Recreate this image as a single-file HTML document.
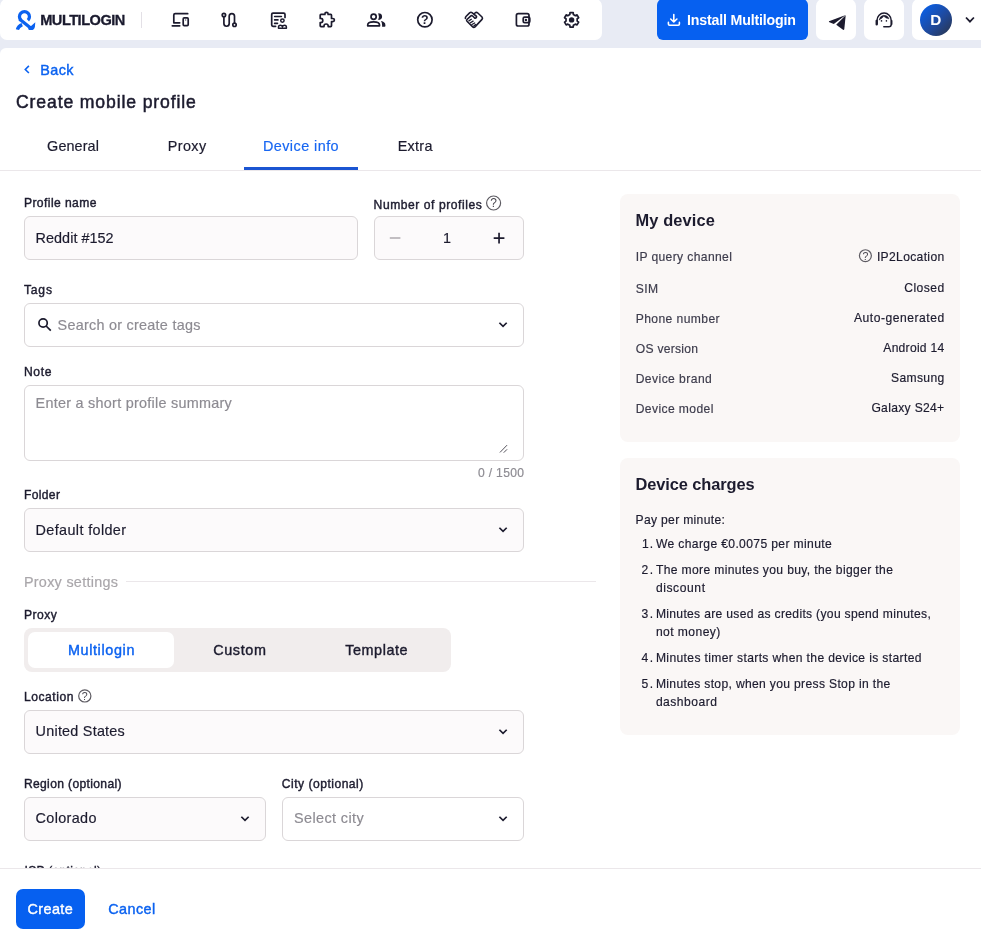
<!DOCTYPE html>
<html lang="en">
<head>
<meta charset="utf-8">
<title>Create mobile profile</title>
<style>
html,body{margin:0;padding:0;}
body{width:981px;height:941px;overflow:hidden;position:relative;background:#e8ebf4;font-family:"Liberation Sans",sans-serif;}
.abs{position:absolute;box-sizing:border-box;}
.t{position:absolute;white-space:nowrap;line-height:20px;}
.panel{background:#fff;}
.inp{border:1px solid #dad6d8;border-radius:6px;background:#fcfafb;}
.inp.w{background:#fff;}
.card{background:#faf7f6;border-radius:8px;}
svg{position:absolute;left:0;top:0;overflow:visible;}
</style>
</head>
<body>
<!-- top bar panels -->
<div class="abs panel" style="left:0;top:-1px;width:602px;height:41px;border-radius:7px;"></div>
<div class="abs" style="left:657px;top:-1px;width:151px;height:41px;border-radius:6px;background:#0660f0;"></div>
<div class="abs panel" style="left:816px;top:-1px;width:40px;height:41px;border-radius:7px;"></div>
<div class="abs panel" style="left:864px;top:-1px;width:40px;height:41px;border-radius:7px;"></div>
<div class="abs panel" style="left:912px;top:-1px;width:80px;height:41px;border-radius:7px;"></div>
<div class="abs" style="left:920px;top:4px;width:32px;height:32px;border-radius:16px;background:linear-gradient(135deg,#0a5fe6 10%,#1f4a9e 55%,#2a3650 95%);"></div>
<!-- main panel -->
<div class="abs panel" style="left:0;top:48px;width:990px;height:900px;border-radius:6px 0 0 0;"></div>
<!-- tab line -->
<div class="abs" style="left:0;top:170px;width:981px;height:1px;background:#ebe7ea;"></div>
<div class="abs" style="left:244px;top:167px;width:114px;height:3px;background:#1b55d2;"></div>
<!-- inputs -->
<div class="abs inp" style="left:24px;top:216px;width:334px;height:44px;"></div>
<div class="abs inp" style="left:374px;top:216px;width:150px;height:44px;"></div>
<div class="abs inp w" style="left:24px;top:303px;width:500px;height:44px;"></div>
<div class="abs inp w" style="left:24px;top:385px;width:500px;height:76px;"></div>
<div class="abs inp" style="left:24px;top:508px;width:500px;height:44px;"></div>
<div class="abs" style="left:126px;top:581px;width:470px;height:1px;background:#ebe7ea;"></div>
<div class="abs" style="left:24px;top:628px;width:427px;height:44px;border-radius:8px;background:#f1eded;"></div>
<div class="abs" style="left:28px;top:632px;width:146px;height:36px;border-radius:7px;background:#fff;"></div>
<div class="abs inp" style="left:24px;top:710px;width:500px;height:44px;"></div>
<div class="abs inp" style="left:24px;top:797px;width:242px;height:44px;"></div>
<div class="abs inp w" style="left:282px;top:797px;width:242px;height:44px;"></div>
<!-- cards -->
<div class="abs card" style="left:620px;top:194px;width:340px;height:248px;"></div>
<div class="abs card" style="left:620px;top:458px;width:340px;height:277px;"></div>
<div class="abs" style="left:0;top:0;width:981px;height:941px;will-change:transform;">
<!-- ISP label (clipped by footer) -->
<div class="abs" style="left:0;top:850px;width:600px;height:18px;overflow:hidden;">
  <span class="t isp" style="left:24.5px;top:10.6px;font-size:12.1px;color:#1c1b2e;-webkit-text-stroke:0.35px #1c1b2e;letter-spacing:0.27px;">ISP (optional)</span>
</div>
<!-- footer -->
<div class="abs" style="left:0;top:868px;width:981px;height:73px;background:#fff;border-top:1px solid #ebe7ea;"></div>
<div class="abs" style="left:16px;top:889px;width:69px;height:40px;border-radius:7px;background:#0660f0;"></div>

<span class="t" style="top:10.00px;font-size:14.6px;color:#1a1a2e;font-weight:700;letter-spacing:-0.502px;left:40.20px;-webkit-text-stroke:0.3px #1a1a2e;">MULTILOGIN</span>
<span class="t" style="top:10.00px;font-size:14.2px;color:#ffffff;font-weight:700;letter-spacing:-0.172px;left:687.00px;">Install Multilogin</span>
<span class="t" style="top:9.50px;font-size:15.3px;color:#ffffff;font-weight:700;left:930.30px;">D</span>
<span class="t" style="top:60.00px;font-size:14.4px;color:#0b62f0;-webkit-text-stroke:0.4px #0b62f0;letter-spacing:0.400px;left:40.30px;">Back</span>
<span class="t" style="top:92.00px;font-size:17.6px;color:#1c1b2e;-webkit-text-stroke:0.5px #1c1b2e;letter-spacing:0.873px;left:16.00px;">Create mobile profile</span>
<span class="t" style="top:136.00px;font-size:14.4px;color:#1c1b2e;-webkit-text-stroke:0.18px #1c1b2e;letter-spacing:0.099px;left:47.10px;">General</span>
<span class="t" style="top:136.00px;font-size:14.4px;color:#1c1b2e;-webkit-text-stroke:0.18px #1c1b2e;letter-spacing:0.401px;left:167.70px;">Proxy</span>
<span class="t" style="top:136.00px;font-size:14.4px;color:#1766f2;-webkit-text-stroke:0.18px #1766f2;letter-spacing:0.451px;left:262.90px;">Device info</span>
<span class="t" style="top:136.00px;font-size:14.4px;color:#1c1b2e;-webkit-text-stroke:0.18px #1c1b2e;letter-spacing:0.277px;left:397.70px;">Extra</span>
<span class="t" style="top:193.00px;font-size:12.1px;color:#1c1b2e;-webkit-text-stroke:0.4px #1c1b2e;letter-spacing:0.427px;left:23.90px;">Profile name</span>
<span class="t" style="top:195.00px;font-size:12.1px;color:#1c1b2e;-webkit-text-stroke:0.4px #1c1b2e;letter-spacing:0.552px;left:373.60px;">Number of profiles</span>
<span class="t" style="top:280.00px;font-size:12.1px;color:#1c1b2e;-webkit-text-stroke:0.4px #1c1b2e;letter-spacing:0.851px;left:23.90px;">Tags</span>
<span class="t" style="top:362.00px;font-size:12.1px;color:#1c1b2e;-webkit-text-stroke:0.4px #1c1b2e;letter-spacing:0.684px;left:23.90px;">Note</span>
<span class="t" style="top:485.00px;font-size:12.1px;color:#1c1b2e;-webkit-text-stroke:0.4px #1c1b2e;letter-spacing:0.364px;left:23.90px;">Folder</span>
<span class="t" style="top:605.00px;font-size:12.1px;color:#1c1b2e;-webkit-text-stroke:0.4px #1c1b2e;letter-spacing:0.520px;left:23.90px;">Proxy</span>
<span class="t" style="top:687.00px;font-size:12.1px;color:#1c1b2e;-webkit-text-stroke:0.4px #1c1b2e;letter-spacing:0.552px;left:23.90px;">Location</span>
<span class="t" style="top:774.00px;font-size:12.1px;color:#1c1b2e;-webkit-text-stroke:0.4px #1c1b2e;letter-spacing:0.349px;left:23.90px;">Region (optional)</span>
<span class="t" style="top:774.00px;font-size:12.1px;color:#1c1b2e;-webkit-text-stroke:0.4px #1c1b2e;letter-spacing:0.492px;left:281.80px;">City (optional)</span>
<span class="t" style="top:228.00px;font-size:14.4px;color:#1c1b2e;-webkit-text-stroke:0.18px #1c1b2e;letter-spacing:0.037px;left:35.60px;">Reddit #152</span>
<span class="t" style="top:228.00px;font-size:14.4px;color:#1c1b2e;-webkit-text-stroke:0.18px #1c1b2e;left:443.00px;">1</span>
<span class="t" style="top:315.00px;font-size:14.4px;color:#8d8b92;-webkit-text-stroke:0.18px #8d8b92;letter-spacing:0.260px;left:57.60px;">Search or create tags</span>
<span class="t" style="top:393.00px;font-size:14.4px;color:#8d8b92;-webkit-text-stroke:0.18px #8d8b92;letter-spacing:0.266px;left:35.60px;">Enter a short profile summary</span>
<span class="t" style="top:463.00px;font-size:12.1px;color:#8d8b92;-webkit-text-stroke:0.18px #8d8b92;letter-spacing:0.326px;left:478.00px;">0 / 1500</span>
<span class="t" style="top:520.00px;font-size:14.4px;color:#1c1b2e;-webkit-text-stroke:0.18px #1c1b2e;letter-spacing:0.370px;left:35.60px;">Default folder</span>
<span class="t" style="top:572.00px;font-size:14.4px;color:#a9a6aa;-webkit-text-stroke:0.18px #a9a6aa;letter-spacing:0.285px;left:23.90px;">Proxy settings</span>
<span class="t" style="top:640.00px;font-size:14.4px;color:#0b62f0;-webkit-text-stroke:0.4px #0b62f0;letter-spacing:0.634px;left:67.90px;">Multilogin</span>
<span class="t" style="top:640.00px;font-size:14.4px;color:#1c1b2e;-webkit-text-stroke:0.4px #1c1b2e;letter-spacing:0.621px;left:213.20px;">Custom</span>
<span class="t" style="top:640.00px;font-size:14.4px;color:#1c1b2e;-webkit-text-stroke:0.4px #1c1b2e;letter-spacing:0.542px;left:345.30px;">Template</span>
<span class="t" style="top:721.00px;font-size:14.4px;color:#1c1b2e;-webkit-text-stroke:0.18px #1c1b2e;letter-spacing:0.233px;left:35.60px;">United States</span>
<span class="t" style="top:808.00px;font-size:14.4px;color:#1c1b2e;-webkit-text-stroke:0.18px #1c1b2e;letter-spacing:0.342px;left:35.60px;">Colorado</span>
<span class="t" style="top:808.00px;font-size:14.4px;color:#8d8b92;-webkit-text-stroke:0.18px #8d8b92;letter-spacing:0.411px;left:294.00px;">Select city</span>
<span class="t" style="top:899.00px;font-size:14.4px;color:#ffffff;-webkit-text-stroke:0.4px #ffffff;letter-spacing:0.419px;left:27.50px;">Create</span>
<span class="t" style="top:899.00px;font-size:14.4px;color:#0b62f0;-webkit-text-stroke:0.4px #0b62f0;letter-spacing:0.441px;left:108.20px;">Cancel</span>
<span class="t" style="top:210.00px;font-size:16.4px;color:#1c1b2e;font-weight:700;letter-spacing:0.105px;left:635.60px;">My device</span>
<span class="t" style="top:247.00px;font-size:12.1px;color:#3d3c4c;-webkit-text-stroke:0.18px #3d3c4c;letter-spacing:0.377px;left:635.70px;">IP query channel</span>
<span class="t" style="top:247.00px;font-size:12.1px;color:#1c1b2e;-webkit-text-stroke:0.18px #1c1b2e;letter-spacing:0.341px;left:876.90px;">IP2Location</span>
<span class="t" style="top:279.00px;font-size:12.1px;color:#3d3c4c;-webkit-text-stroke:0.18px #3d3c4c;letter-spacing:0.442px;left:635.70px;">SIM</span>
<span class="t" style="top:278.00px;font-size:12.1px;color:#1c1b2e;-webkit-text-stroke:0.18px #1c1b2e;letter-spacing:0.469px;left:904.20px;">Closed</span>
<span class="t" style="top:309.00px;font-size:12.1px;color:#3d3c4c;-webkit-text-stroke:0.18px #3d3c4c;letter-spacing:0.414px;left:635.70px;">Phone number</span>
<span class="t" style="top:308.00px;font-size:12.1px;color:#1c1b2e;-webkit-text-stroke:0.18px #1c1b2e;letter-spacing:0.525px;left:854.00px;">Auto-generated</span>
<span class="t" style="top:339.00px;font-size:12.1px;color:#3d3c4c;-webkit-text-stroke:0.18px #3d3c4c;letter-spacing:0.286px;left:635.70px;">OS version</span>
<span class="t" style="top:338.00px;font-size:12.1px;color:#1c1b2e;-webkit-text-stroke:0.18px #1c1b2e;letter-spacing:0.267px;left:883.30px;">Android 14</span>
<span class="t" style="top:369.00px;font-size:12.1px;color:#3d3c4c;-webkit-text-stroke:0.18px #3d3c4c;letter-spacing:0.439px;left:635.70px;">Device brand</span>
<span class="t" style="top:368.00px;font-size:12.1px;color:#1c1b2e;-webkit-text-stroke:0.18px #1c1b2e;letter-spacing:0.334px;left:891.10px;">Samsung</span>
<span class="t" style="top:399.00px;font-size:12.1px;color:#3d3c4c;-webkit-text-stroke:0.18px #3d3c4c;letter-spacing:0.403px;left:635.70px;">Device model</span>
<span class="t" style="top:398.00px;font-size:12.1px;color:#1c1b2e;-webkit-text-stroke:0.18px #1c1b2e;letter-spacing:0.321px;left:871.40px;">Galaxy S24+</span>
<span class="t" style="top:474.00px;font-size:16.4px;color:#1c1b2e;font-weight:700;letter-spacing:-0.099px;left:635.60px;">Device charges</span>
<span class="t" style="top:510.00px;font-size:12.1px;color:#1c1b2e;-webkit-text-stroke:0.18px #1c1b2e;letter-spacing:0.321px;left:635.60px;">Pay per minute:</span>
<span class="t" style="top:534.00px;font-size:12.1px;color:#1c1b2e;-webkit-text-stroke:0.18px #1c1b2e;letter-spacing:0.906px;left:642.00px;">1.</span>
<span class="t" style="top:534.00px;font-size:12.1px;color:#1c1b2e;-webkit-text-stroke:0.18px #1c1b2e;letter-spacing:0.369px;left:655.90px;">We charge €0.0075 per minute</span>
<span class="t" style="top:560.00px;font-size:12.1px;color:#1c1b2e;-webkit-text-stroke:0.18px #1c1b2e;letter-spacing:1.306px;left:641.60px;">2.</span>
<span class="t" style="top:560.00px;font-size:12.1px;color:#1c1b2e;-webkit-text-stroke:0.18px #1c1b2e;letter-spacing:0.360px;left:655.90px;">The more minutes you buy, the bigger the</span>
<span class="t" style="top:578.00px;font-size:12.1px;color:#1c1b2e;-webkit-text-stroke:0.18px #1c1b2e;letter-spacing:0.579px;left:655.90px;">discount</span>
<span class="t" style="top:604.00px;font-size:12.1px;color:#1c1b2e;-webkit-text-stroke:0.18px #1c1b2e;letter-spacing:1.306px;left:641.60px;">3.</span>
<span class="t" style="top:604.00px;font-size:12.1px;color:#1c1b2e;-webkit-text-stroke:0.18px #1c1b2e;letter-spacing:0.321px;left:655.90px;">Minutes are used as credits (you spend minutes,</span>
<span class="t" style="top:622.00px;font-size:12.1px;color:#1c1b2e;-webkit-text-stroke:0.18px #1c1b2e;letter-spacing:0.444px;left:655.90px;">not money)</span>
<span class="t" style="top:648.00px;font-size:12.1px;color:#1c1b2e;-webkit-text-stroke:0.18px #1c1b2e;letter-spacing:1.306px;left:641.60px;">4.</span>
<span class="t" style="top:648.00px;font-size:12.1px;color:#1c1b2e;-webkit-text-stroke:0.18px #1c1b2e;letter-spacing:0.369px;left:655.90px;">Minutes timer starts when the device is started</span>
<span class="t" style="top:674.00px;font-size:12.1px;color:#1c1b2e;-webkit-text-stroke:0.18px #1c1b2e;letter-spacing:1.306px;left:641.60px;">5.</span>
<span class="t" style="top:674.00px;font-size:12.1px;color:#1c1b2e;-webkit-text-stroke:0.18px #1c1b2e;letter-spacing:0.337px;left:655.90px;">Minutes stop, when you press Stop in the</span>
<span class="t" style="top:692.00px;font-size:12.1px;color:#1c1b2e;-webkit-text-stroke:0.18px #1c1b2e;letter-spacing:0.480px;left:655.90px;">dashboard</span>

<!-- icons -->
<svg width="981" height="941" viewBox="0 0 981 941" fill="none" stroke-linecap="round" stroke-linejoin="round">
<!-- logo -->
<g stroke="#0b62f0" stroke-width="3.3" stroke-linecap="butt">
  <path d="M27.9 20.2 A5 5 0 1 0 21 20.2"/>
  <path d="M19.4 19 L31.6 28.8"/>
  <path d="M22.2 24.6 Q18.2 26.2 17.4 29.7"/>
</g>
<path d="M35.3 22.2 L34.9 27 Q34.3 29.4 32.6 30 L28.8 30 L27.6 26.6 L30.8 26.2 Z" fill="#0b62f0"/>
<!-- divider -->
<path d="M141.5 12 V28" stroke="#e3e0e6" stroke-width="1" stroke-linecap="butt"/>
<g stroke="#1c1b2e" stroke-width="1.7">
<!-- devices -->
<path d="M187.7 13.7 H175.2 Q173.8 13.7 173.8 15.1 V22.8 H179.7"/>
<path d="M172.3 25.8 H179.7"/>
<rect x="183.2" y="17.9" width="5" height="7.7" rx="1"/>
<path d="M185.7 19.8 V20.2" stroke-width="0.9"/>
<!-- route -->
<circle cx="223.9" cy="15" r="1.7"/>
<circle cx="234.5" cy="24.8" r="1.7"/>
<path d="M223.9 17 V23.6 A2.65 2.65 0 0 0 229.2 23.6 V16.2 A2.65 2.65 0 0 1 234.5 16.2 V22.8"/>
<!-- doc person -->
<path d="M285 17.4 V14.5 Q285 13.2 283.7 13.2 H273 Q271.7 13.2 271.7 14.5 V25 Q271.7 26.3 273 26.3 H275.6"/>
<path d="M274.6 16.5 H281.5" stroke-width="1.4"/>
<path d="M274.6 19.9 H278 M274.6 23.4 H277.5" stroke-width="1.6"/>
<circle cx="282.4" cy="20.6" r="1.7" stroke-width="1.5"/>
<path d="M278.5 28.2 V27.2 Q278.5 25.2 280.4 25.2 Q281.9 25.2 282.45 26.7 Q283 25.2 284.5 25.2 Q286.4 25.2 286.4 27.2 V28.2 Z" stroke-width="1.5"/>
<!-- extension -->
<path d="M321 14.4 H324.9 V13.9 A1.6 1.6 0 0 1 328.1 13.9 V14.4 H330.7 Q331.5 14.4 331.5 15.2 V18.5 H332.8 A1.6 1.6 0 0 1 332.8 21.7 H331.5 V25.8 Q331.5 26.6 330.7 26.6 H328.2 V26.1 A2.1 2.1 0 0 0 324 26.1 V26.6 H321 Q320.2 26.6 320.2 25.8 V22.6 H320.7 A2.1 2.1 0 0 0 320.7 18.4 H320.2 V15.2 Q320.2 14.4 321 14.4 Z"/>
<!-- group -->
<circle cx="373.6" cy="16.7" r="2.6"/>
<path d="M367.7 25.8 V25 C367.7 22.9 370.2 21.8 373.6 21.8 S379.5 22.9 379.5 25 V25.8 Z"/>
<!-- help -->
<circle cx="424.9" cy="19.7" r="7.2"/>
<!-- handshake -->
<path d="M465.4 18.4 Q465.2 17.2 466.2 16.2 L469.6 12.9 Q470.9 11.7 472.3 12.8 L473.8 14.1 L475 13 Q476.4 11.7 477.8 13 L482 17 Q483 18.2 482 19.4 L475 26.9 Q473.8 28 472.7 26.9 L467 21.2 Q466.2 20.3 467 19.5 L470.6 16.1 Q471.6 15.2 472.6 16 L474.4 17.8 Q475.4 18.6 476.2 17.7 Q477 16.8 476.2 16 L473.8 14.1" stroke-width="1.6"/>
<path d="M468.9 20.9 L471.3 19.3 M470.4 22.7 L473.1 21.1 M471.9 24.5 L474.7 23 M473.8 26 L475.6 24.6" stroke-width="1.3"/>
<!-- wallet -->
<rect x="516.4" y="13.6" width="12.6" height="12.4" rx="1.8"/>
<rect x="523.2" y="17.2" width="6.6" height="5.4" rx="1.4"/>
<!-- settings -->
<path d="M569.84 14.48 L569.99 12.68 L573.21 12.68 L573.36 14.48 L575.41 15.66 L577.05 14.89 L578.66 17.69 L577.18 18.71 L577.18 21.09 L578.66 22.11 L577.05 24.91 L575.41 24.14 L573.36 25.32 L573.21 27.12 L569.99 27.12 L569.84 25.32 L567.79 24.14 L566.15 24.91 L564.54 22.11 L566.02 21.09 L566.02 18.71 L564.54 17.69 L566.15 14.89 L567.79 15.66Z" stroke-width="1.7"/>
<!-- headset -->
<path d="M877 23.8 V20.4 A7.1 7.3 0 0 1 891.2 20.4 V24.4 Q891.2 26.7 888.8 26.7 H883.8" stroke-width="1.5"/>
<path d="M876.7 20.8 V24.4" stroke-width="2.3"/>
<path d="M891.7 20.8 V24.2" stroke-width="1.5"/>
<path d="M879.3 19.7 Q879.7 16.2 883.6 15.3 Q887.8 15.1 889 18.8 Q886 18.6 883.8 16.3 Q882.2 18.6 879.3 19.7 Z" fill="#1c1b2e" stroke-width="0.5"/>
<!-- chevron user -->
<path d="M966 17.5 L969.95 21.6 L973.9 17.5" stroke-width="1.8" stroke-linecap="butt" stroke-linejoin="miter"/>
</g>
<g fill="#1c1b2e">
<path d="M378.2 13.2 A3.9 3.4 0 0 1 378.2 20 A9 9 0 0 0 378.2 13.2 Z"/>
<path d="M380.9 21.1 Q385.4 21.8 385.4 25.2 V26 Q385.4 26.8 384.6 26.8 H382.1 V25 Q382.1 22.8 380.9 21.1 Z"/>
<circle cx="525.9" cy="19.9" r="1.2"/>
<circle cx="571.6" cy="19.9" r="2.7"/>
<circle cx="881.5" cy="20.9" r="0.8"/>
<circle cx="886.4" cy="20.9" r="0.8"/>
<!-- telegram -->
<path d="M845.7 15 L829 21.2 Q828.6 21.9 829.4 22.2 L833.8 23.9 Z"/>
<path d="M845.7 15.2 L836.2 24.8 L843.4 29.9 Q844.2 29.9 844.3 29 Z"/>
</g>
<text x="424.9" y="24.1" font-family="Liberation Sans, sans-serif" font-size="12.4" font-weight="700" fill="#1c1b2e" text-anchor="middle">?</text>
<!-- install download icon -->
<g stroke="#fff" stroke-width="1.6">
<path d="M673.8 14.6 V21.8 M670.7 19 L673.8 22 L676.9 19 M668.4 22.4 V24 Q668.4 25.2 669.6 25.2 H678.2 Q679.4 25.2 679.4 24 V22.4"/>
</g>
<!-- back chevron -->
<path d="M28.9 65.9 L25.3 69.45 L28.9 73" stroke="#0b62f0" stroke-width="1.6" stroke-linecap="butt" stroke-linejoin="miter"/>
<!-- help icons small -->
<g stroke="#5d5b62" stroke-width="1.2">
<circle cx="493.6" cy="203" r="7"/>
<circle cx="84.8" cy="695.9" r="6.1"/>
<circle cx="865.4" cy="255.7" r="5.95"/>
</g>
<text x="493.6" y="207.3" font-family="Liberation Sans, sans-serif" font-size="12" fill="#4a4850" text-anchor="middle">?</text>
<text x="84.8" y="699.7" font-family="Liberation Sans, sans-serif" font-size="10.6" fill="#4a4850" text-anchor="middle">?</text>
<text x="865.4" y="259.6" font-family="Liberation Sans, sans-serif" font-size="10.6" fill="#4a4850" text-anchor="middle">?</text>
<!-- stepper -->
<path d="M389.8 238 H400.4" stroke="#b3afb4" stroke-width="1.6" stroke-linecap="butt"/>
<path d="M493.7 238.1 H504.4 M499.05 232.7 V243.5" stroke="#1c1b2e" stroke-width="1.7" stroke-linecap="butt"/>
<!-- search icon -->
<g stroke="#1c1b2e" stroke-width="1.7" stroke-linecap="butt">
<circle cx="43.1" cy="323.05" r="4.15"/>
<path d="M46.1 326 L50.8 330.7"/>
</g>
<!-- chevrons -->
<g stroke="#1c1b2e" stroke-width="1.7" stroke-linecap="butt" stroke-linejoin="miter">
<path d="M499.40 322.75 L503.05 326.40 L506.70 322.75"/>
<path d="M499.40 527.75 L503.05 531.40 L506.70 527.75"/>
<path d="M499.40 729.75 L503.05 733.40 L506.70 729.75"/>
<path d="M241.35 816.75 L245.00 820.40 L248.65 816.75"/>
<path d="M499.40 816.75 L503.05 820.40 L506.70 816.75"/>
</g>
<!-- resize handle -->
<path d="M500.2 452.2 L506.8 445.4 M504 452.4 L506.8 449.6" stroke="#55535c" stroke-width="1"/>
</svg>
</div>
</body>
</html>
